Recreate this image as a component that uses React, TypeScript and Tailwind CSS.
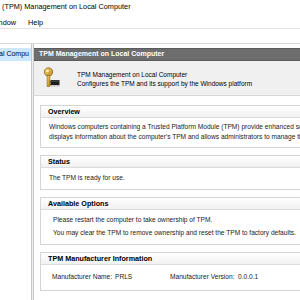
const font = { fontFamily: '"Liberation Sans", Arial, sans-serif' };

function KeyChipIcon() {
  return (
    <svg width="19" height="22" viewBox="0 0 18 22">
      <defs>
        <linearGradient id="gold" x1="0" y1="0" x2="1" y2="1">
          <stop offset="0" stopColor="#f7d774" />
          <stop offset="1" stopColor="#b7861d" />
        </linearGradient>
      </defs>
      <circle cx="6" cy="5" r="4.2" fill="url(#gold)" stroke="#8a6212" strokeWidth="0.8" />
      <circle cx="5" cy="4" r="1.2" fill="#fff7d6" />
      <rect x="4.6" y="8.5" width="2.8" height="11" fill="url(#gold)" stroke="#8a6212" strokeWidth="0.6" />
      <rect x="7.2" y="14" width="2" height="1.5" fill="#b7861d" />
      <rect x="7.2" y="17" width="1.6" height="1.5" fill="#b7861d" />
      <rect x="8" y="13" width="9" height="5" rx="0.5" fill="#1e1e1e" />
      <rect x="8.5" y="13.5" width="8" height="1.2" fill="#4a4a4a" />
      <path d="M9 18v1.5M10.5 18v1.5M12 18v1.5M13.5 18v1.5M15 18v1.5M16.5 18v1.5" stroke="#888" strokeWidth="0.6" />
    </svg>
  );
}

function Section({
  title,
  bodyHeight,
  children,
}: {
  title: string;
  bodyHeight: string;
  children: React.ReactNode;
}) {
  return (
    <div className="border border-[#d5d5d5] bg-white w-[270px]">
      <div className="h-[12px] flex items-center pl-[7px] border-b border-[#dcdcdc] bg-gradient-to-b from-[#ffffff] to-[#f1f1f1]">
        <span className="text-[7.2px] font-bold text-black leading-none">{title}</span>
      </div>
      <div className={`${bodyHeight} text-[6.6px] text-[#222] leading-none flex flex-col justify-center`}>
        {children}
      </div>
    </div>
  );
}

export default function App() {
  return (
    <div className="w-[300px] h-[300px] overflow-hidden bg-white flex flex-col" style={font}>
      {/* title bar */}
      <div className="h-[18px] flex items-center pl-[2px] pb-[3px] text-[7.3px] text-black whitespace-nowrap">
        (TPM) Management on Local Computer
      </div>
      {/* menu */}
      <div className="h-[11px] flex items-center gap-[12px] text-[7.3px] text-black whitespace-nowrap border-b border-[#e3e3e3]">
        <span className="-ml-[3px]">indow</span>
        <span>Help</span>
      </div>
      {/* toolbar */}
      <div className="h-[15px] bg-white border-b border-[#d9d9d9]" />

      <div className="flex-1 flex min-h-0">
        {/* left tree */}
        <div className="w-[31px] bg-white pt-[4px] overflow-hidden">
          <div className="h-[13px] bg-[#cce8ff] flex items-center text-[7px] whitespace-nowrap text-black">
            <span className="-ml-[1px]">al Compu</span>
          </div>
        </div>
        <div className="w-[3px] bg-[#f0f0f0] border-l border-r border-[#c8c8c8]" />

        {/* main panel */}
        <div className="flex-1 flex flex-col min-w-0 bg-white">
          <div className="h-[4px] bg-white" />
          <div className="h-[13px] bg-[#6d6d6d] border-y border-[#5a5a5a] flex items-center pl-[5px] text-[7px] font-bold text-white whitespace-nowrap">
            TPM Management on Local Computer
          </div>
          <div className="h-[35px] bg-[#f0f0f0] border-b border-[#d8d8d8] flex items-center pl-[8px] gap-[16px] whitespace-nowrap">
            <KeyChipIcon />
            <div className="flex flex-col gap-[2px] pt-[3px] text-[6.5px] leading-none text-black">
              <span>TPM Management on Local Computer</span>
              <span>Configures the TPM and its support by the Windows platform</span>
            </div>
          </div>

          <div className="flex flex-col gap-[7px] pl-[6px] pt-[9px] whitespace-nowrap">
            <Section title="Overview" bodyHeight="h-[29px]">
              <div className="pl-[8px] flex flex-col gap-[3px]">
                <span>Windows computers containing a Trusted Platform Module (TPM) provide enhanced security features for applications.</span>
                <span>displays information about the computer's TPM and allows administrators to manage the device.</span>
              </div>
            </Section>
            <Section title="Status" bodyHeight="h-[21px]">
              <span className="pl-[8px]">The TPM is ready for use.</span>
            </Section>
            <Section title="Available Options" bodyHeight="h-[34px]">
              <div className="pl-[12px] flex flex-col gap-[6px]">
                <span>Please restart the computer to take ownership of TPM.</span>
                <span>You may clear the TPM to remove ownership and reset the TPM to factory defaults.</span>
              </div>
            </Section>
            <Section title="TPM Manufacturer Information" bodyHeight="h-[25px]">
              <div className="pl-[11px] flex">
                <span className="w-[63px]">Manufacturer Name:</span>
                <span className="w-[55px]">PRLS</span>
                <span className="w-[68px]">Manufacturer Version:</span>
                <span>0.0.0.1</span>
              </div>
            </Section>
          </div>
        </div>
      </div>
    </div>
  );
}
